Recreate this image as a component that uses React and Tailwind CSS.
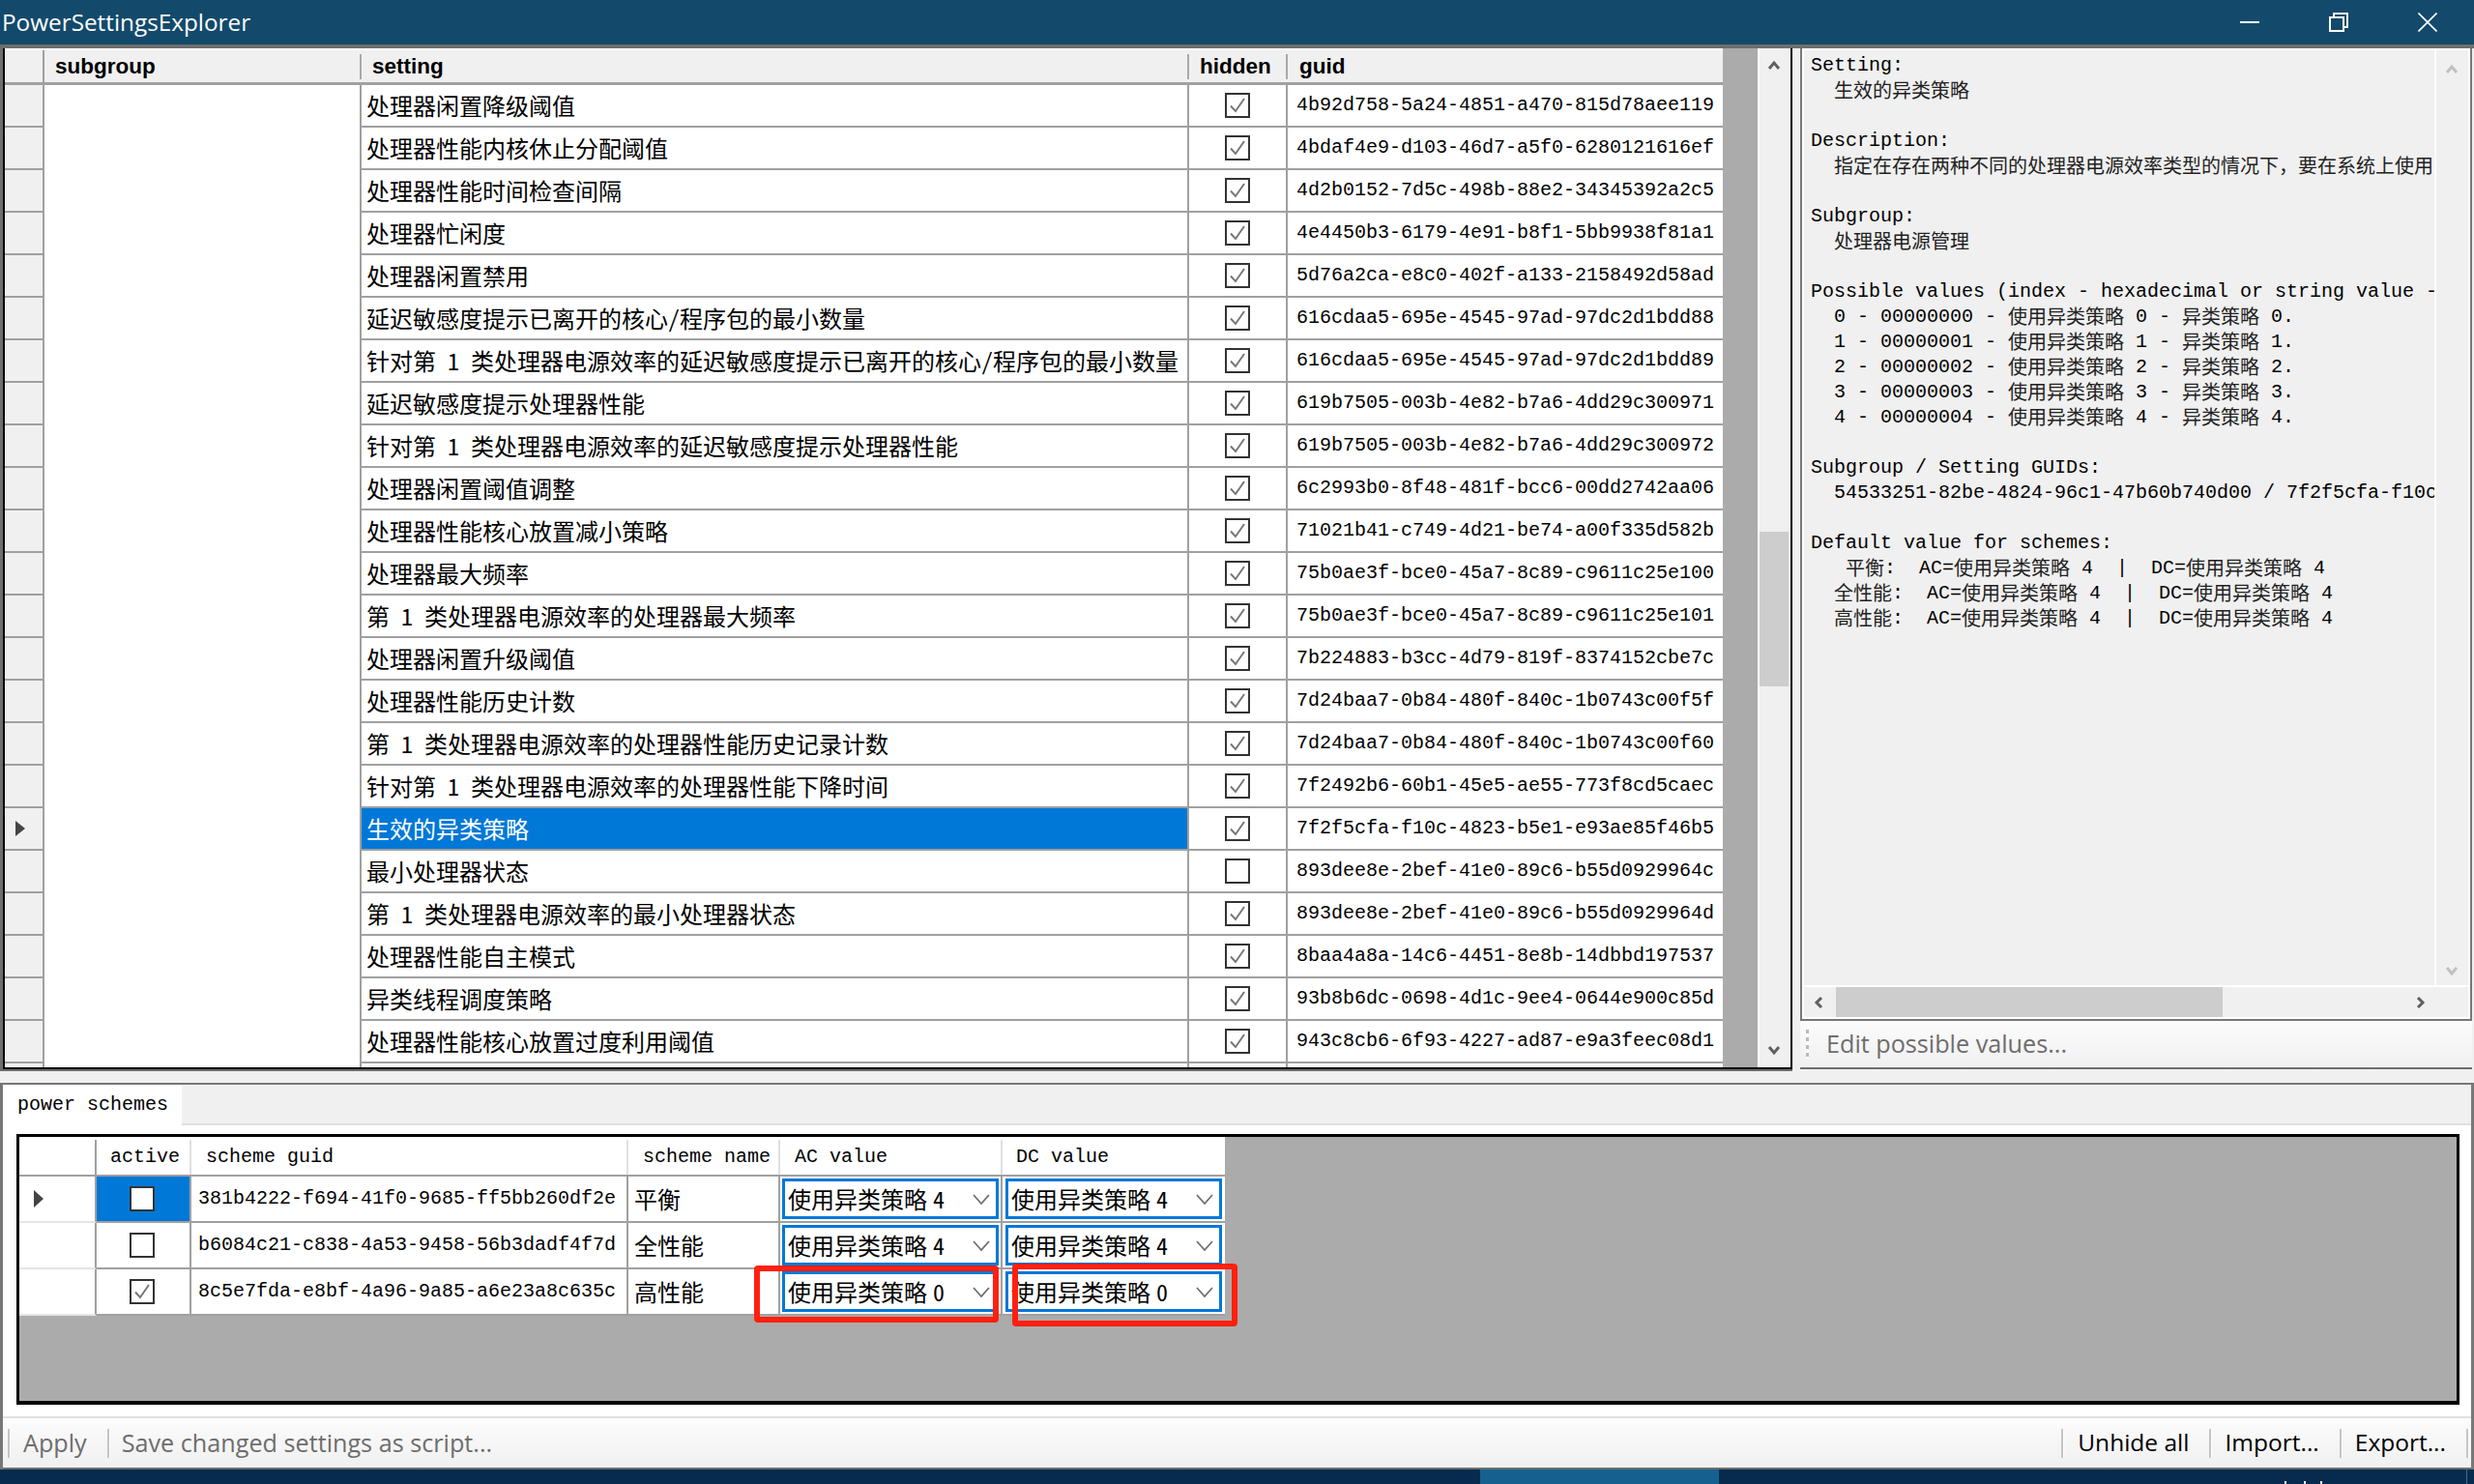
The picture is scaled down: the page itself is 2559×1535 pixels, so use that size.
import React from "react";

const cjk = { fontFamily: '"Noto Sans Mono CJK SC","Noto Sans CJK SC",monospace' };
const mono = { fontFamily: '"Liberation Mono","Noto Sans CJK SC",monospace' };
const ui = { fontFamily: '"Open Sans","Noto Sans",sans-serif' };
const bold = { fontFamily: '"Liberation Sans",sans-serif' };

const rows = [
  ["处理器闲置降级阈值", "4b92d758-5a24-4851-a470-815d78aee119", 1],
  ["处理器性能内核休止分配阈值", "4bdaf4e9-d103-46d7-a5f0-6280121616ef", 1],
  ["处理器性能时间检查间隔", "4d2b0152-7d5c-498b-88e2-34345392a2c5", 1],
  ["处理器忙闲度", "4e4450b3-6179-4e91-b8f1-5bb9938f81a1", 1],
  ["处理器闲置禁用", "5d76a2ca-e8c0-402f-a133-2158492d58ad", 1],
  ["延迟敏感度提示已离开的核心/程序包的最小数量", "616cdaa5-695e-4545-97ad-97dc2d1bdd88", 1],
  ["针对第 1 类处理器电源效率的延迟敏感度提示已离开的核心/程序包的最小数量", "616cdaa5-695e-4545-97ad-97dc2d1bdd89", 1],
  ["延迟敏感度提示处理器性能", "619b7505-003b-4e82-b7a6-4dd29c300971", 1],
  ["针对第 1 类处理器电源效率的延迟敏感度提示处理器性能", "619b7505-003b-4e82-b7a6-4dd29c300972", 1],
  ["处理器闲置阈值调整", "6c2993b0-8f48-481f-bcc6-00dd2742aa06", 1],
  ["处理器性能核心放置减小策略", "71021b41-c749-4d21-be74-a00f335d582b", 1],
  ["处理器最大频率", "75b0ae3f-bce0-45a7-8c89-c9611c25e100", 1],
  ["第 1 类处理器电源效率的处理器最大频率", "75b0ae3f-bce0-45a7-8c89-c9611c25e101", 1],
  ["处理器闲置升级阈值", "7b224883-b3cc-4d79-819f-8374152cbe7c", 1],
  ["处理器性能历史计数", "7d24baa7-0b84-480f-840c-1b0743c00f5f", 1],
  ["第 1 类处理器电源效率的处理器性能历史记录计数", "7d24baa7-0b84-480f-840c-1b0743c00f60", 1],
  ["针对第 1 类处理器电源效率的处理器性能下降时间", "7f2492b6-60b1-45e5-ae55-773f8cd5caec", 1],
  ["生效的异类策略", "7f2f5cfa-f10c-4823-b5e1-e93ae85f46b5", 1],
  ["最小处理器状态", "893dee8e-2bef-41e0-89c6-b55d0929964c", 0],
  ["第 1 类处理器电源效率的最小处理器状态", "893dee8e-2bef-41e0-89c6-b55d0929964d", 1],
  ["处理器性能自主模式", "8baa4a8a-14c6-4451-8e8b-14dbbd197537", 1],
  ["异类线程调度策略", "93b8b6dc-0698-4d1c-9ee4-0644e900c85d", 1],
  ["处理器性能核心放置过度利用阈值", "943c8cb6-6f93-4227-ad87-e9a3feec08d1", 1],
];

const desc = `Setting:
  生效的异类策略

Description:
  指定在存在两种不同的处理器电源效率类型的情况下，要在系统上使用

Subgroup:
  处理器电源管理

Possible values (index - hexadecimal or string value -
  0 - 00000000 - 使用异类策略 0 - 异类策略 0.
  1 - 00000001 - 使用异类策略 1 - 异类策略 1.
  2 - 00000002 - 使用异类策略 2 - 异类策略 2.
  3 - 00000003 - 使用异类策略 3 - 异类策略 3.
  4 - 00000004 - 使用异类策略 4 - 异类策略 4.

Subgroup / Setting GUIDs:
  54533251-82be-4824-96c1-47b60b740d00 / 7f2f5cfa-f10c-4823-b5e1-e93ae85f46b5

Default value for schemes:
   平衡:  AC=使用异类策略 4  |  DC=使用异类策略 4
  全性能:  AC=使用异类策略 4  |  DC=使用异类策略 4
  高性能:  AC=使用异类策略 4  |  DC=使用异类策略 4`;

function DescLine({ text }) {
  const parts = text.split(/([\u4e00-\u9fff，]+)/);
  return (
    <div className="h-[26px]">
      {parts.map((p, i) =>
        i % 2 ? (
          <span key={i} className="relative top-[2px] text-[#222222]">{p}</span>
        ) : (
          <span key={i}>{p}</span>
        )
      )}
    </div>
  );
}

function Check({ on }) {
  return (
    <span className="flex h-[26px] w-[26px] items-center justify-center border-2 border-[#333333] bg-white">
      {on ? (
        <svg width="20" height="20" viewBox="0 0 20 20" fill="none">
          <path d="M3 10.5 L8 16 L17 3" stroke="#777777" strokeWidth="2" />
        </svg>
      ) : null}
    </span>
  );
}

function Sep({ cls = "" }) {
  return <span className={`h-[30px] w-[3px] shrink-0 border-r border-white bg-[#c4c4c4] ${cls}`} />;
}

function Chev({ dir, color = "#606060", cls = "" }) {
  const d = { up: "M2 10 L7 4 L12 10", down: "M2 4 L7 10 L12 4", left: "M9 2 L4 7 L9 12", right: "M5 2 L10 7 L5 12" }[dir];
  return (
    <svg width="14" height="14" viewBox="0 0 14 14" fill="none" className={cls}>
      <path d={d} stroke={color} strokeWidth="3" />
    </svg>
  );
}

function Row({ r, i }) {
  const sel = i === 17;
  return (
    <div className="flex h-[44px] shrink-0 border-b-2 border-[#a0a0a0]">
      <div className="flex w-[39px] shrink-0 items-center bg-[#f0f0f0] pl-[11px]">
        {sel ? (
          <svg width="10" height="16" viewBox="0 0 10 16">
            <path d="M0 0 L10 8 L0 16 Z" fill="#444444" />
          </svg>
        ) : null}
      </div>
      <div className="-mb-[2px] w-[330px] shrink-0 border-x-2 border-[#a0a0a0] bg-white" />
      <div
        style={cjk}
        className={`flex w-[856px] shrink-0 items-center overflow-hidden whitespace-pre border-r-2 border-[#a0a0a0] pl-[5px] text-[24px] ${sel ? "bg-[#0078d7] text-white" : "bg-white text-black"}`}
      >
        {r[0]}
      </div>
      <div className="flex w-[102px] shrink-0 items-center justify-center border-r-2 border-[#a0a0a0] bg-white">
        <Check on={r[2]} />
      </div>
      <div style={mono} className="flex w-[450px] shrink-0 items-center bg-white pl-[9px] text-[20px] text-black">
        {r[1]}
      </div>
    </div>
  );
}

function Combo({ v }) {
  return (
    <div style={cjk} className="flex h-[42px] w-[224px] items-center justify-between whitespace-pre border-[3px] border-[#0078d7] bg-white pl-[3px] pr-[6px] text-[24px] text-black">
      <span>
        使用异类策略<span className="ml-[6px]">{v}</span>
      </span>
      <svg width="18" height="11" viewBox="0 0 18 11" fill="none">
        <path d="M1 1 L9 10 L17 1" stroke="#707070" strokeWidth="1.8" />
      </svg>
    </div>
  );
}

const schemes = [
  ["381b4222-f694-41f0-9685-ff5bb260df2e", "平衡", 0, 4],
  ["b6084c21-c838-4a53-9458-56b3dadf4f7d", "全性能", 0, 4],
  ["8c5e7fda-e8bf-4a96-9a85-a6e23a8c635c", "高性能", 1, 0],
];

export default function App() {
  return (
    <div className="relative flex h-[1535px] w-[2559px] flex-col overflow-hidden bg-[#f0f0f0]">
      <div className="flex h-[46px] shrink-0 items-center justify-between bg-[#134a6b] text-white">
        <span style={ui} className="pl-[2px] text-[24.3px]">PowerSettingsExplorer</span>
        <div className="flex items-center">
          <svg width="20" height="20" viewBox="0 0 20 20" className="mr-[72px]">
            <rect x="0" y="9" width="20" height="2" fill="white" />
          </svg>
          <svg width="20" height="20" viewBox="0 0 20 20" fill="none" stroke="white" strokeWidth="2" className="mr-[72px]">
            <rect x="1" y="5" width="14" height="14" />
            <path d="M5 5 V1 H19 V15 H15" />
          </svg>
          <svg width="20" height="20" viewBox="0 0 20 20" fill="none" stroke="white" strokeWidth="1.6" className="mr-[38px]">
            <path d="M0.5 0.5 L19.5 19.5 M19.5 0.5 L0.5 19.5" />
          </svg>
        </div>
      </div>

      <div className="flex h-[1062px] shrink-0 border-t-4 border-[#6e6e6e]">
        <div className="h-full w-[1854px] shrink-0 border-b-2 border-l-[3px] border-[#6e6e6e]">
          <div className="flex h-full overflow-hidden border-b-2 border-l-2 border-r-2 border-black">
            <div className="flex h-full w-[1813px] shrink-0 flex-col overflow-hidden bg-[#ababab]">
              <div className="flex h-[38px] w-[1777px] shrink-0 items-center border-b-[3px] border-t-2 border-[#a0a0a0] border-t-white bg-[#f0f0f0] text-[22.5px] font-bold text-black" style={bold}>
                <div className="w-[41px] self-stretch border-r-2 border-[#a0a0a0]" />
                <div className="w-[328px] border-r-2 border-[#a8a8a8] pl-[11px] leading-[26px]">subgroup</div>
                <div className="w-[856px] border-r-2 border-[#a8a8a8] pl-[11px] leading-[26px]">setting</div>
                <div className="w-[102px] border-r-2 border-[#a8a8a8] pl-[11px] leading-[26px]">hidden</div>
                <div className="pl-[12px] leading-[26px]">guid</div>
              </div>
              <div className="w-[1777px]">
                {rows.map((r, i) => (
                  <Row key={i} r={r} i={i} />
                ))}
                <div className="flex h-[6px] shrink-0">
                  <div className="w-[39px] bg-[#f0f0f0]" />
                  <div className="w-[330px] border-x-2 border-[#a0a0a0] bg-white" />
                  <div className="w-[856px] border-r-2 border-[#a0a0a0] bg-white" />
                  <div className="w-[102px] border-r-2 border-[#a0a0a0] bg-white" />
                  <div className="w-[450px] bg-white" />
                </div>
              </div>
            </div>
            <div className="relative h-full grow border-l-2 border-white bg-[#f0f0f0]">
              <Chev dir="up" cls="absolute left-[8px] top-[11px]" />
              <div className="absolute left-0 top-[500px] h-[160px] w-[30px] bg-[#cdcdcd]" />
              <Chev dir="down" cls="absolute bottom-[11px] left-[8px]" />
            </div>
          </div>
        </div>

        <div className="ml-[8px] flex h-full w-[1px] grow flex-col pr-[2px]">
          <div className="flex h-[1006px] shrink-0 flex-col border-2 border-t-0 border-[#777777] bg-white p-[2px]">
            <div className="flex h-px grow">
              <div style={mono} className="w-px grow overflow-hidden whitespace-pre bg-[#f0f0f0] pl-[7px] pt-[3px] text-[20px] leading-[26px] text-black">
                {desc.split("\n").map((l, i) => (
                  <DescLine key={i} text={l} />
                ))}
              </div>
              <div className="relative ml-[2px] w-[33px] bg-[#f0f0f0]">
                <Chev dir="up" color="#c0c0c0" cls="absolute left-[9px] top-[13px]" />
                <Chev dir="down" color="#c0c0c0" cls="absolute bottom-[8px] left-[9px]" />
              </div>
            </div>
            <div className="mt-[2px] flex h-[31px] shrink-0 items-center bg-[#f0f0f0]">
              <Chev dir="left" cls="ml-[9px]" />
              <div className="ml-[10px] h-full w-[400px] bg-[#cdcdcd]" />
              <Chev dir="right" cls="ml-[197px]" />
            </div>
          </div>
          <div className="flex h-[50px] shrink-0 items-center border-b-2 border-[#6e6e6e] bg-gradient-to-b from-[#fcfcfc] to-[#f0f0f0] pl-[6px]">
            <span className="h-[30px] w-[3px] bg-[repeating-linear-gradient(#bbbbbb_0_4px,#ffffff_4px_8px)]" />
            <span style={ui} className="ml-[18px] text-[25.2px] text-[#6d6d6d]">Edit possible values...</span>
          </div>
        </div>
      </div>

      <div className="h-[12px] shrink-0 bg-[#f0f0f0]" />

      <div className="flex h-[400px] shrink-0 flex-col border-x-[3px] border-t-2 border-[#777777] bg-white">
        <div className="flex h-[42px] shrink-0 border-b-2 border-[#e0e0e0] bg-[#f0f0f0]">
          <div style={mono} className="-mb-[2px] flex w-[185px] items-center bg-white pl-[15px] text-[20px] text-black">
            power schemes
          </div>
        </div>
        <div className="flex h-px grow flex-col bg-white pb-[12px] pl-[14px] pr-[12px] pt-[9px]">
          <div className="h-px grow border-[3px] border-b-4 border-black bg-[#ababab]">
            <div className="w-[1247px]">
              <div style={mono} className="flex h-[41px] border-b-2 border-[#a0a0a0] bg-white pt-[3px] text-[20px] text-black">
                <div className="w-[80px] border-r-2 border-[#a0a0a0]" />
                <div className="flex w-[98px] items-center border-r-2 border-[#e0e0e0] pl-[14px]">active</div>
                <div className="flex w-[452px] items-center border-r-2 border-[#e0e0e0] pl-[15px]">scheme guid</div>
                <div className="flex w-[157px] items-center border-r-2 border-[#e0e0e0] pl-[15px]">scheme name</div>
                <div className="flex w-[230px] items-center border-r-2 border-[#e0e0e0] pl-[15px]">AC value</div>
                <div className="flex w-[230px] items-center pl-[14px]">DC value</div>
              </div>
              {schemes.map((s, i) => (
                <div key={i} className="flex h-[48px] border-b-2 border-[#a0a0a0] bg-white">
                  <div className="-mb-[2px] flex w-[80px] items-center border-b-2 border-r-2 border-[#a0a0a0] border-b-[#e5e5e5] pl-[15px]">
                    {i === 0 ? (
                      <svg width="10" height="18" viewBox="0 0 10 18">
                        <path d="M0 0 L10 9 L0 18 Z" fill="#444444" />
                      </svg>
                    ) : null}
                  </div>
                  <div className={`flex w-[98px] items-center justify-center border-r-2 border-[#a0a0a0] pr-[2px] ${i === 0 ? "bg-[#0078d7]" : "bg-white"}`}>
                    <Check on={s[2]} />
                  </div>
                  <div style={mono} className="flex w-[452px] items-center border-r-2 border-[#a0a0a0] pl-[7px] text-[20px] text-black">
                    {s[0]}
                  </div>
                  <div style={cjk} className="flex w-[157px] items-center border-r-2 border-[#a0a0a0] pl-[6px] text-[24px] text-black">
                    {s[1]}
                  </div>
                  <div className="flex w-[230px] items-center justify-center border-r-2 border-[#a0a0a0]">
                    <Combo v={s[3]} />
                  </div>
                  <div className="flex w-[230px] items-center justify-center">
                    <Combo v={s[3]} />
                  </div>
                </div>
              ))}
            </div>
          </div>
        </div>
        <div style={ui} className="flex h-[53px] shrink-0 items-center border-t-2 border-[#e0e0e0] bg-gradient-to-b from-[#fcfcfc] to-[#f0f0f0] pl-[5px]">
          <Sep />
          <span className="ml-[13px] text-[25.2px] text-[#6d6d6d]">Apply</span>
          <Sep cls="ml-[21px]" />
          <span className="ml-[12px] text-[25.2px] text-[#6d6d6d]">Save changed settings as script...</span>
          <Sep cls="ml-auto" />
          <span className="ml-[14px] text-[24.5px] text-black">Unhide all</span>
          <Sep cls="ml-[21px]" />
          <span className="ml-[13px] text-[24.5px] text-black">Import...</span>
          <Sep cls="ml-[21px]" />
          <span className="ml-[13px] text-[24.5px] text-black">Export...</span>
          <Sep cls="ml-[21px] mr-[2px]" />
        </div>
        <div className="h-[2px] shrink-0 bg-[#6e6e6e]" />
      </div>

      <div className="relative h-[15px] shrink-0 bg-[#062b4f]">
        <div className="absolute left-[1531px] top-0 h-full w-[247px] bg-[#16608f]" />
        <div className="absolute left-[2363px] top-[12px] h-[3px] w-[2px] bg-white" />
        <div className="absolute left-[2383px] top-[12px] h-[3px] w-[2px] bg-white" />
        <div className="absolute left-[2400px] top-[12px] h-[3px] w-[2px] bg-white" />
        <div className="absolute left-[2551px] top-0 h-full w-px bg-[#4a6a85]" />
      </div>

      <div className="absolute left-[780px] top-[1309px] h-[59px] w-[253px] rounded-[4px] border-[6px] border-[#ff2010]" />
      <div className="absolute left-[1047px] top-[1307px] h-[65px] w-[233px] rounded-[4px] border-[6px] border-[#ff2010]" />
    </div>
  );
}
